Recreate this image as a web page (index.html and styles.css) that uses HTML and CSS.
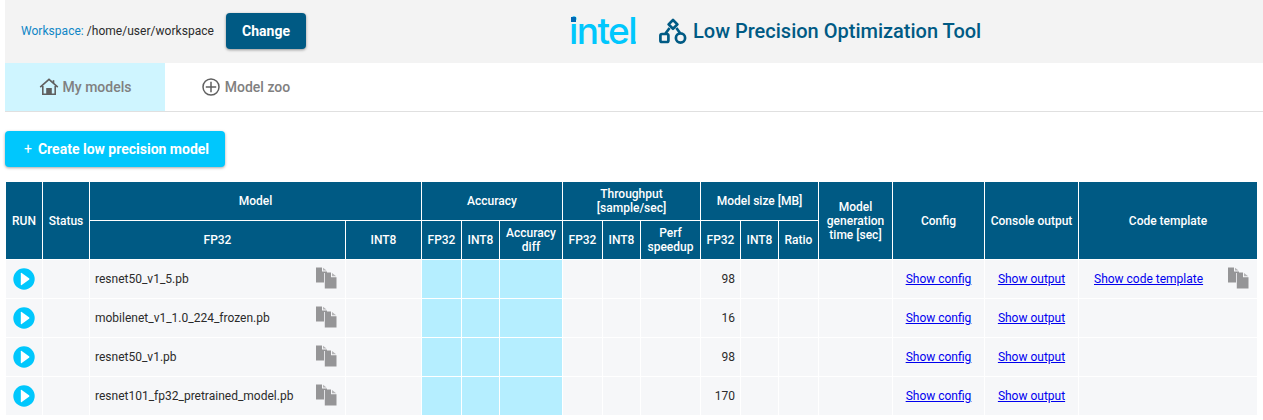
FILE: index.html
```html
<!DOCTYPE html>
<html lang="en">
<head>
<meta charset="utf-8">
<title>Low Precision Optimization Tool</title>
<link rel="stylesheet" href="styles.css">
</head>
<body>
<svg class="defs" width="0" height="0" aria-hidden="true">
  <defs>
    <symbol id="play" viewBox="0 0 22 22">
      <circle cx="11" cy="11" r="10.7" fill="#00c7fd"/>
      <path d="M7.8 5.4 Q7.8 4.4 8.7 4.9 L16 10.2 Q17 11 16 11.8 L8.7 17.1 Q7.8 17.6 7.8 16.6 Z" fill="#fff"/>
    </symbol>
    <symbol id="copy" viewBox="0 0 21 22">
      <path d="M0 0.5H6V4.5H11V6H8V15.5H0Z" fill="#959597"/>
      <path d="M7 0.8L10.6 3.6H7Z" fill="#b4b4b6"/>
      <path d="M8.8 5.5H15V10.2H20.5V21.5H8.8Z" fill="#959597"/>
      <path d="M16 6L20.2 9.2H16Z" fill="#b4b4b6"/>
    </symbol>
  </defs>
</svg>

<header class="topbar">
  <div class="workspace"><span class="ws-label">Workspace:</span> /home/user/workspace</div>
  <button class="change">Change</button>
  <div class="brand">
    <span class="intel">intel<i class="intel-dot"></i><i class="intel-reg"></i></span>
    <svg class="tool-icon" viewBox="0 0 28 26" width="28" height="26" fill="none" stroke="#005a84" stroke-width="2.7">
      <path d="M14 2 L18.4 6.4 L14 10.8 L9.6 6.4 Z" stroke-linejoin="round"/>
      <path d="M10.6 10 L6.5 15.5 M17.4 10 L21 15"/>
      <rect x="1.4" y="16" width="8" height="8" rx="1.6"/>
      <circle cx="21.5" cy="20" r="4.6"/>
    </svg>
    <h1 class="title">Low Precision Optimization Tool</h1>
  </div>
</header>

<nav class="tabs">
  <a class="tab active">
    <svg class="tab-icon" viewBox="0 0 20 20" width="20" height="20" fill="none" stroke="#606060" stroke-width="1.6">
      <path d="M1.2 10.2 L10 2.4 L18.8 10.2"/>
      <path d="M14.5 3.2 V6"/>
      <path d="M3.8 9 V17.2 H16.2 V9"/>
      <path d="M8 17 V11.8 H12 V17" fill="#606060"/>
    </svg>
    My models
  </a>
  <a class="tab">
    <svg class="tab-icon" viewBox="0 0 20 20" width="20" height="20" fill="none" stroke="#606060" stroke-width="1.5">
      <circle cx="10" cy="10" r="8"/>
      <path d="M10 4.8 V15.2 M4.8 10 H15.2"/>
    </svg>
    Model zoo
  </a>
</nav>

<div class="actions">
  <button class="create"><span class="plus">+</span>Create low precision model</button>
</div>

<table class="models">
  <colgroup>
    <col class="c37"><col class="c47"><col class="c256"><col class="c76">
    <col class="c40"><col class="c38"><col class="c63">
    <col class="c40"><col class="c38"><col class="c60">
    <col class="c40"><col class="c38"><col class="c40">
    <col class="c74"><col class="c92"><col class="c94"><col class="c179">
  </colgroup>
  <thead>
    <tr>
      <th rowspan="2">RUN</th>
      <th rowspan="2">Status</th>
      <th colspan="2">Model</th>
      <th colspan="3">Accuracy</th>
      <th colspan="3">Throughput<br>[sample/sec]</th>
      <th colspan="3">Model size [MB]</th>
      <th rowspan="2">Model<br>generation<br>time [sec]</th>
      <th rowspan="2">Config</th>
      <th rowspan="2">Console output</th>
      <th rowspan="2">Code template</th>
    </tr>
    <tr>
      <th>FP32</th><th>INT8</th>
      <th>FP32</th><th>INT8</th><th>Accuracy<br>diff</th>
      <th>FP32</th><th>INT8</th><th>Perf<br>speedup</th>
      <th>FP32</th><th>INT8</th><th>Ratio</th>
    </tr>
  </thead>
  <tbody>
    <tr>
      <td class="run"><svg class="play"><use href="#play"/></svg></td>
      <td></td>
      <td><div class="file"><span>resnet50_v1_5.pb</span><svg class="copy"><use href="#copy"/></svg></div></td>
      <td></td>
      <td class="acc"></td><td class="acc"></td><td class="acc"></td>
      <td></td><td></td><td></td>
      <td class="num">98</td><td></td><td></td><td></td>
      <td class="link"><a href="#">Show config</a></td>
      <td class="link"><a href="#">Show output</a></td>
      <td><div class="file code"><a href="#">Show code template</a><svg class="copy"><use href="#copy"/></svg></div></td>
    </tr>
    <tr>
      <td class="run"><svg class="play"><use href="#play"/></svg></td>
      <td></td>
      <td><div class="file"><span>mobilenet_v1_1.0_224_frozen.pb</span><svg class="copy"><use href="#copy"/></svg></div></td>
      <td></td>
      <td class="acc"></td><td class="acc"></td><td class="acc"></td>
      <td></td><td></td><td></td>
      <td class="num">16</td><td></td><td></td><td></td>
      <td class="link"><a href="#">Show config</a></td>
      <td class="link"><a href="#">Show output</a></td>
      <td></td>
    </tr>
    <tr>
      <td class="run"><svg class="play"><use href="#play"/></svg></td>
      <td></td>
      <td><div class="file"><span>resnet50_v1.pb</span><svg class="copy"><use href="#copy"/></svg></div></td>
      <td></td>
      <td class="acc"></td><td class="acc"></td><td class="acc"></td>
      <td></td><td></td><td></td>
      <td class="num">98</td><td></td><td></td><td></td>
      <td class="link"><a href="#">Show config</a></td>
      <td class="link"><a href="#">Show output</a></td>
      <td></td>
    </tr>
    <tr>
      <td class="run"><svg class="play"><use href="#play"/></svg></td>
      <td></td>
      <td><div class="file"><span>resnet101_fp32_pretrained_model.pb</span><svg class="copy"><use href="#copy"/></svg></div></td>
      <td></td>
      <td class="acc"></td><td class="acc"></td><td class="acc"></td>
      <td></td><td></td><td></td>
      <td class="num">170</td><td></td><td></td><td></td>
      <td class="link"><a href="#">Show config</a></td>
      <td class="link"><a href="#">Show output</a></td>
      <td></td>
    </tr>
  </tbody>
</table>
</body>
</html>
```
FILE: styles.css
```css
* { box-sizing: border-box; }
html, body { margin: 0; padding: 0; background: #fff; }
body {
  padding-left: 5px;
  font-family: Roboto, "Liberation Sans", sans-serif;
  font-size: 12px;
  color: #2b2b2b;
  overflow: hidden;
}
.defs { position: absolute; }

.topbar {
  display: flex;
  align-items: center;
  height: 63px;
  padding-left: 16px;
  padding-bottom: 2px;
  background: #f3f3f3;
}
.workspace { font-size: 12px; letter-spacing: .03px; color: #2b2b2b; white-space: nowrap; width: 205px; }
.ws-label { color: #0f86c6; }
.change {
  width: 80px;
  height: 36px;
  border: 0;
  border-radius: 4px;
  background: #005a84;
  color: #fff;
  font: 700 14px Roboto, sans-serif;
  box-shadow: 0 1px 3px rgba(0, 0, 0, .4);
}
.brand { display: flex; align-items: center; margin-left: 263px; }
.intel {
  position: relative;
  width: 90px;
  font: 500 37px/40px Inter, Roboto, sans-serif;
  letter-spacing: -1.6px;
  color: #00c7fd;
}
.intel-dot {
  position: absolute;
  left: 2px;
  top: 6px;
  width: 5px;
  height: 5px;
  background: #0068b5;
}
.intel-reg {
  position: absolute;
  left: 64px;
  top: 30px;
  width: 3px;
  height: 3px;
  border-radius: 50%;
  background: #00c7fd;
}
.tool-icon { flex: none; margin-right: 6px; }
.title { margin: 0; font: 500 20px Roboto, sans-serif; color: #005a84; white-space: nowrap; }

.tabs { display: flex; height: 49px; border-bottom: 1px solid #e0e0e0; }
.tab {
  display: flex;
  align-items: center;
  justify-content: center;
  gap: 4px;
  width: 160px;
  height: 48px;
  font-size: 14px;
  font-weight: 500;
  color: #808080;
}
.tab + .tab { padding-left: 1px; }
.tab.active { background: #cff5ff; }
.tab-icon { flex: none; }

.actions { padding-top: 19px; height: 69px; }
.create {
  display: flex;
  align-items: center;
  width: 220px;
  height: 36px;
  padding: 0 0 0 19px;
  border: 0;
  border-radius: 4px;
  background: #00c7fd;
  color: #fff;
  font: 700 14px Roboto, sans-serif;
  box-shadow: 0 1px 3px rgba(0, 0, 0, .35);
}
.plus { margin-right: 6px; font-weight: 400; }

.models {
  table-layout: fixed;
  width: 1253px;
  border-collapse: collapse;
  font-size: 12px;
}
.c37 { width: 37px; } .c47 { width: 47px; } .c256 { width: 256px; } .c76 { width: 76px; }
.c40 { width: 40px; } .c38 { width: 38px; } .c63 { width: 63px; } .c60 { width: 60px; }
.c74 { width: 74px; } .c92 { width: 92px; } .c94 { width: 94px; } .c179 { width: 179px; }

.models th, .models td { border: 1px solid #fff; padding: 0; height: 39px; }
.models th {
  background: #005a84;
  color: #fff;
  font-weight: 500;
  line-height: 14px;
  text-align: center;
}
.models td { background: #f6f7f9; }
.models td.acc { background: #b5eeff; }
.run { text-align: center; }
.play { display: block; width: 22px; height: 22px; margin: 0 0 0 7px; }
.file { display: flex; align-items: center; justify-content: space-between; padding: 0 8px 0 5px; }
.file.code { padding-left: 15px; }
.copy { flex: none; width: 21px; height: 22px; margin-top: -3px; }
.num { text-align: right; padding-right: 5px !important; }
.link { text-align: center; }
a[href] { color: #0000ee; }
```
